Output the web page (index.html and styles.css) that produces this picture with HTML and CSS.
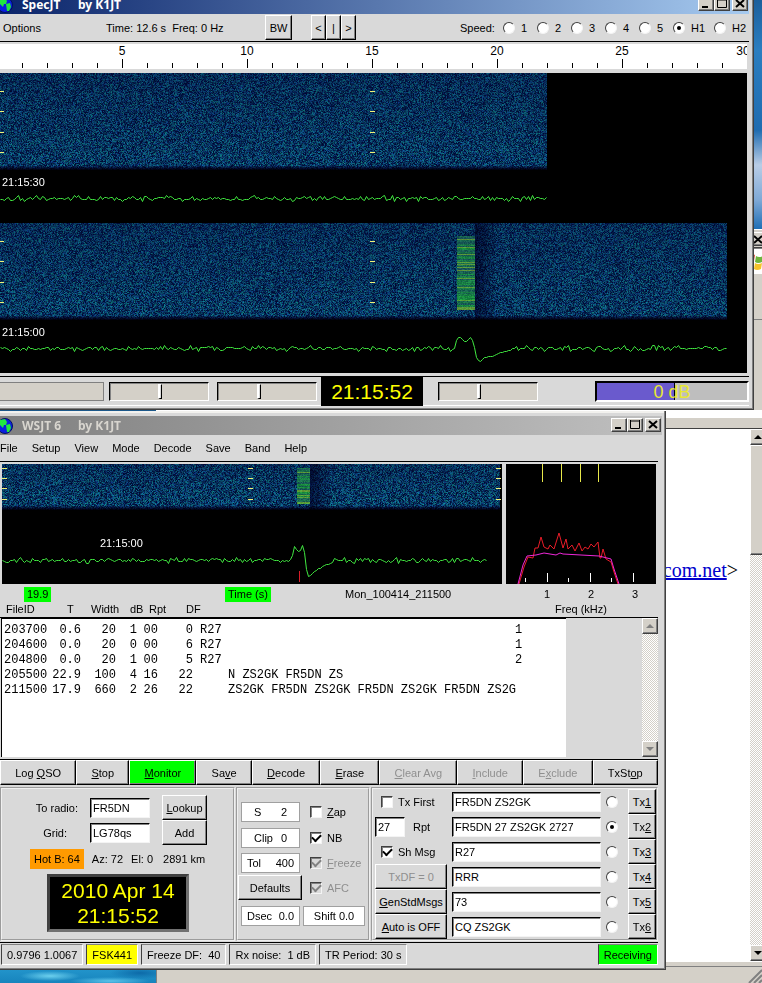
FILE: index.html
```html
<!DOCTYPE html>
<html lang="en">
<head>
    <meta charset="UTF-8">
    <meta name="viewport" content="width=device-width, initial-scale=1.0">
    <title>WSJT 6 by K1JT</title>
    <link rel="stylesheet" href="styles.css">
</head>
<body>
    <div class="desktop">

        <!-- Mail window at the back -->
        <div class="window mail">
            <div class="mail-title"><button class="win-btn" aria-label="Close"><svg width="10" height="9"><path d="M1 1l8 7M9 1l-8 7" stroke="#000" stroke-width="2"/></svg></button></div>
            <div class="mail-brand">
                <svg width="20" height="20" viewBox="0 0 20 20"><path d="M3 3q3-2 6 0l-1 6q-3-2-6 0z" fill="#d9573a"/><path d="M10 4q3 2 7 0l-1 6q-4 2-7 0z" fill="#6fb53c"/><path d="M2 10q3-2 6 0l-1 6q-3-2-6 0z" fill="#3b78cf"/><path d="M9 11q3 2 7 0l-1 6q-4 2-7 0z" fill="#f5c32c"/></svg>
            </div>
            <div class="mail-tools"></div>
            <div class="mail-fields"></div>
            <div class="mail-body">
                <div class="mail-text"><a href="#">com.net</a>&gt;</div>
                <div class="scrollbar">
                    <button class="scroll-btn" aria-label="Scroll up"><svg width="8" height="4"><path d="M4 0l4 4H0z"/></svg></button>
                    <div class="scroll-thumb"></div>
                    <button class="scroll-btn last" aria-label="Scroll down"><svg width="8" height="4"><path d="M0 0h8L4 4z"/></svg></button>
                </div>
            </div>
            <div class="mail-status"><svg width="14" height="14"><path d="M1 14L14 1M6 14l8-8M11 14l3-3" stroke="#808080" stroke-width="2"/></svg></div>
        </div>

        <!-- SpecJT -->
        <div class="window spec">
            <div class="title-bar active">
                <svg class="globe" width="16" height="16" viewBox="0 0 16 16"><circle cx="8" cy="8" r="7.5" fill="#0a1ee0" stroke="#001060"/><path d="M3 2l5-1 2 3-1 3-2 0-1 3-4-4zM9 7l4-1 1 4-2 4-2 0z" fill="#20e840"/></svg>
                <span class="app-name">SpecJT</span><span>by K1JT</span>
                <div class="win-btns">
                    <button class="win-btn" aria-label="Minimize"><svg width="10" height="9"><path d="M1 8h6" stroke="#000" stroke-width="2"/></svg></button>
                    <button class="win-btn" aria-label="Maximize"><svg width="10" height="9"><path d="M.5 0v8.500h9V0M0 1h10" fill="none" stroke="#000"/></svg></button>
                    <button class="win-btn close" aria-label="Close"><svg width="10" height="9"><path d="M1 1l8 7M9 1l-8 7" stroke="#000" stroke-width="2"/></svg></button>
                </div>
            </div>
            <div class="spec-menu">
                <span class="spec-options">Options</span>
                <span class="spec-time">Time: 12.6 s&nbsp; Freq: 0 Hz</span>
                <button class="tk-btn bw">BW</button>
                <div class="nudge">
                    <button class="tk-btn">&lt;</button><button class="tk-btn">|</button><button class="tk-btn">&gt;</button>
                </div>
                <div class="speed">
                    <span>Speed:</span>
                    <label><input type="radio" name="speed">1</label>
                    <label><input type="radio" name="speed">2</label>
                    <label><input type="radio" name="speed">3</label>
                    <label><input type="radio" name="speed">4</label>
                    <label><input type="radio" name="speed">5</label>
                    <label class="wide"><input type="radio" name="speed" checked>H1</label>
                    <label class="wide"><input type="radio" name="speed">H2</label>
                </div>
            </div>
            <svg class="ruler">
                <defs>
                    <pattern id="minor" x="-3" y="0" width="25" height="25" patternUnits="userSpaceOnUse"><rect y="19" width="1" height="5"/></pattern>
                    <pattern id="major" x="-3" y="0" width="125" height="25" patternUnits="userSpaceOnUse"><rect y="15" width="1" height="9"/></pattern>
                </defs>
                <rect width="100%" height="25" fill="url(#minor)"/>
                <rect width="100%" height="25" fill="url(#major)"/>
                <g text-anchor="middle">
                    <text x="122" y="11">5</text>
                    <text x="247" y="11">10</text>
                    <text x="372" y="11">15</text>
                    <text x="497" y="11">20</text>
                    <text x="622" y="11">25</text>
                    <text x="743" y="11">30</text>
                </g>
            </svg>
            <div class="plot spec-plot">
                <canvas id="spec-canvas"></canvas>
                <span class="stamp first">21:15:30</span>
                <span class="stamp second">21:15:00</span>
            </div>
            <div class="spec-status">
                <div class="status-bar"></div>
                <input type="range" class="scale" aria-label="Brightness" value="51">
                <input type="range" class="scale" aria-label="Contrast" value="42">
                <div class="clock">21:15:52</div>
                <input type="range" class="scale gain" aria-label="Gain" value="40">
                <div class="level"><div class="level-fill" style="width: 52%"></div><span>0 dB</span></div>
            </div>
        </div>

        <!-- WSJT main window -->
        <div class="window wsjt">
            <div class="title-bar">
                <svg class="globe" width="16" height="16" viewBox="0 0 16 16"><circle cx="8" cy="8" r="7.5" fill="#0a1ee0" stroke="#001060"/><path d="M3 2l5-1 2 3-1 3-2 0-1 3-4-4zM9 7l4-1 1 4-2 4-2 0z" fill="#20e840"/></svg>
                <span class="app-name">WSJT 6</span><span>by K1JT</span>
                <div class="win-btns">
                    <button class="win-btn" aria-label="Minimize"><svg width="10" height="9"><path d="M1 8h6" stroke="#000" stroke-width="2"/></svg></button>
                    <button class="win-btn" aria-label="Maximize"><svg width="10" height="9"><path d="M.5 0v8.500h9V0M0 1h10" fill="none" stroke="#000"/></svg></button>
                    <button class="win-btn close" aria-label="Close"><svg width="10" height="9"><path d="M1 1l8 7M9 1l-8 7" stroke="#000" stroke-width="2"/></svg></button>
                </div>
            </div>
            <div class="content">
                <nav class="menu">
                    <span>File</span><span>Setup</span><span>View</span><span>Mode</span><span>Decode</span><span>Save</span><span>Band</span><span>Help</span>
                </nav>
                <div class="graphs">
                    <div class="graph-main">
                        <div class="plot main-plot">
                            <canvas id="main-canvas"></canvas>
                            <span class="stamp main">21:15:00</span>
                        </div>
                        <div class="under">
                            <span class="green">19.9</span><span class="green">Time (s)</span><span>Mon_100414_211500</span>
                        </div>
                        <div class="columns">
                            <span>FileID</span><span>T</span><span>Width</span><span>dB</span><span>Rpt</span><span>DF</span>
                        </div>
                    </div>
                    <div class="graph-freq">
                        <svg class="freq-plot" viewBox="0 0 150 120" fill="none">
                            <path d="M36.500 0v18M55.500 0v18M74.500 0v18M92.500 0v18" stroke="#e8e84a"/>
                            <path d="M41.500 109v9M84.500 109v9M127.500 109v9M19.500 114v4M62.500 114v4M105.500 114v4" stroke="#fff"/>
                            <polyline stroke="#e81c28" points="13,120 18,103 22,93 27,94 29,84 32,84 35,73 38,83 42,85 44,81 48,85 53,69 57,84 60,75 62,85 66,81 69,87 73,79 76,87 79,83 82,85 85,80 88,83 92,78 94,94 95,94 97,85 100,95 105,98 108,108 112,120"/>
                            <polyline stroke="#f028d8" points="12,120 17,101 21,92 30,91 38,89 50,91 54,89 57,90 75,91 93,92 105,95 108,105 113,120"/>
                        </svg>
                        <div class="khz"><span>1</span><span>2</span><span>3</span></div>
                        <div class="freq-label">Freq (kHz)</div>
                    </div>
                </div>

                <div class="decodes">
                    <div class="decode-text">
                        <table>
                            <colgroup><col class="c-id"><col class="c-t"><col class="c-w"><col class="c-db"><col class="c-rpt"><col class="c-df"><col class="c-short"><col class="c-msg"><col></colgroup>
                            <tr><td>203700</td><td>0.6</td><td>20</td><td>1</td><td>00</td><td>0</td><td>R27</td><td></td><td>1</td></tr>
                            <tr><td>204600</td><td>0.0</td><td>20</td><td>0</td><td>00</td><td>6</td><td>R27</td><td></td><td>1</td></tr>
                            <tr><td>204800</td><td>0.0</td><td>20</td><td>1</td><td>00</td><td>5</td><td>R27</td><td></td><td>2</td></tr>
                            <tr><td>205500</td><td>22.9</td><td>100</td><td>4</td><td>16</td><td>22</td><td></td><td>N ZS2GK FR5DN ZS</td><td></td></tr>
                            <tr><td>211500</td><td>17.9</td><td>660</td><td>2</td><td>26</td><td>22</td><td></td><td>ZS2GK FR5DN ZS2GK FR5DN ZS2GK FR5DN ZS2G</td><td></td></tr>
                        </table>
                    </div>
                    <div class="scrollbar">
                        <button class="scroll-btn" aria-label="Scroll up" disabled><svg width="8" height="4"><path d="M4 0l4 4H0z"/></svg></button>
                        <button class="scroll-btn last" aria-label="Scroll down" disabled><svg width="8" height="4"><path d="M0 0h8L4 4z"/></svg></button>
                    </div>
                </div>

                <div class="actions">
                    <button class="tk-btn">Log <u>Q</u>SO</button>
                    <button class="tk-btn"><u>S</u>top</button>
                    <button class="tk-btn on"><u>M</u>onitor</button>
                    <button class="tk-btn">Sa<u>v</u>e</button>
                    <button class="tk-btn"><u>D</u>ecode</button>
                    <button class="tk-btn"><u>E</u>rase</button>
                    <button class="tk-btn" disabled><u>C</u>lear Avg</button>
                    <button class="tk-btn" disabled><u>I</u>nclude</button>
                    <button class="tk-btn" disabled>E<u>x</u>clude</button>
                    <button class="tk-btn">TxSt<u>o</u>p</button>
                </div>

                <div class="panels">
                    <div class="panel station">
                        <div class="station-form">
                            <label for="to-radio">To radio:</label>
                            <input type="text" id="to-radio" value="FR5DN">
                            <button class="tk-btn"><u>L</u>ookup</button>
                            <label for="grid">Grid:</label>
                            <input type="text" id="grid" value="LG78qs">
                            <button class="tk-btn">Add</button>
                        </div>
                        <div class="bearing">
                            <span class="hot">Hot B: 64</span><span>Az: 72</span><span>El: 0</span><span>2891 km</span>
                        </div>
                        <div class="clock date">2010 Apr 14<br>21:15:52</div>
                    </div>

                    <div class="panel params">
                        <div class="value"><span>S</span><span>2</span></div>
                        <label><input type="checkbox"><span><u>Z</u>ap</span></label>
                        <div class="value"><span>Clip</span><span>0</span></div>
                        <label><input type="checkbox" checked><span>NB</span></label>
                        <div class="value"><span>Tol</span><span>400</span></div>
                        <label class="off"><input type="checkbox" checked disabled><span><u>F</u>reeze</span></label>
                        <button class="tk-btn">Defaults</button>
                        <label class="off"><input type="checkbox" checked disabled><span>AFC</span></label>
                        <div class="value"><span>Dsec</span><span>0.0</span></div>
                        <div class="value shift"><span>Shift 0.0</span></div>
                    </div>

                    <div class="panel messages">
                        <label class="check"><input type="checkbox"><span>Tx First</span></label>
                        <input type="text" aria-label="Message 1" value="FR5DN ZS2GK">
                        <input type="radio" name="tx" aria-label="Select Tx1">
                        <button class="tk-btn">Tx<u>1</u></button>

                        <label class="report"><input type="text" value="27"><span>Rpt</span></label>
                        <input type="text" aria-label="Message 2" value="FR5DN 27 ZS2GK 2727">
                        <input type="radio" name="tx" aria-label="Select Tx2" checked>
                        <button class="tk-btn">Tx<u>2</u></button>

                        <label class="check"><input type="checkbox" checked><span>Sh Msg</span></label>
                        <input type="text" aria-label="Message 3" value="R27">
                        <input type="radio" name="tx" aria-label="Select Tx3">
                        <button class="tk-btn">Tx<u>3</u></button>

                        <button class="tk-btn" disabled>TxDF = 0</button>
                        <input type="text" aria-label="Message 4" value="RRR">
                        <input type="radio" name="tx" aria-label="Select Tx4">
                        <button class="tk-btn">Tx<u>4</u></button>

                        <button class="tk-btn"><u>G</u>enStdMsgs</button>
                        <input type="text" aria-label="Message 5" value="73">
                        <input type="radio" name="tx" aria-label="Select Tx5">
                        <button class="tk-btn">Tx<u>5</u></button>

                        <button class="tk-btn"><u>A</u>uto is OFF</button>
                        <input type="text" aria-label="Message 6" value="CQ ZS2GK">
                        <input type="radio" name="tx" aria-label="Select Tx6">
                        <button class="tk-btn">Tx<u>6</u></button>
                    </div>
                </div>

                <div class="status">
                    <span>0.9796 1.0067</span>
                    <span class="mode">FSK441</span>
                    <span>Freeze DF:&nbsp; 40</span>
                    <span>Rx noise:&nbsp; 1 dB</span>
                    <span>TR Period: 30 s</span>
                    <span class="receiving">Receiving</span>
                </div>
            </div>
        </div>
    </div>

    <script src="plots.js"></script>
</body>
</html>
```
FILE: styles.css
```css
* {
    box-sizing: border-box;
}

body {
    margin: 0;
    font-family: 'Liberation Sans', Arial, sans-serif;
    font-size: 11px;
    line-height: 14px;
    color: #000;
}

button, input {
    font: inherit;
    color: inherit;
    margin: 0;
    padding: 0;
    border-radius: 0;
}

.desktop {
    position: relative;
    min-height: 100vh;
    overflow: hidden;
    background:
        radial-gradient(ellipse 30px 5px at 50px 976px, #6cd0ee, transparent),
        radial-gradient(ellipse 40px 4px at 110px 981px, #5cc4ea, transparent),
        radial-gradient(ellipse 30px 6px at 140px 973px, #0d6aa8, transparent),
        linear-gradient(#1c5f9c 0, #2b7ec0 50px, #1f6cb0 130px, #b9cde6 165px, #7fa9d6 200px, #1c6db4 230px, #1b5687 420px, #2a9fd4 960px, #1784bd 100%);
}

/* Window frames */
.window {
    position: absolute;
    display: flex;
    flex-direction: column;
    background: #d9d9d9;
    border: solid #404040;
    border-width: 0 1px 1px 0;
    box-shadow: inset -1px -1px #808080, inset 0 2px #f2f1ee;
}

.title-bar {
    display: flex;
    align-items: center;
    height: 19px;
    padding-right: 1px;
    background: linear-gradient(90deg, #808080, #c0c0c0);
    color: #d8d5cf;
    font-family: 'Noto Sans', sans-serif;
    font-size: 12px;
    font-weight: bold;
}

.title-bar.active {
    background: linear-gradient(90deg, #0a246a, #a6caf0);
    color: #fff;
}

.globe {
    flex: none;
    margin: 0 9px 0 -3px;
}

.app-name {
    width: 56px;
}

.win-btns {
    display: flex;
    margin: 0 0 2px auto;
}

.win-btn, .scroll-btn {
    display: flex;
    align-items: center;
    justify-content: center;
    width: 16px;
    height: 14px;
    background: #d4d0c8;
    border: 1px solid;
    border-color: #fff #404040 #404040 #fff;
    box-shadow: inset -1px -1px #808080;
}

.win-btn.close {
    margin-left: 2px;
}

/* Tk widgets */
.tk-btn {
    background: #d9d9d9;
    border: 1px solid;
    border-color: #fff #000 #000 #fff;
    box-shadow: inset -1px -1px #828282;
    white-space: nowrap;
}

.tk-btn:disabled, .off {
    color: #8f8f8f;
}

input[type="text"] {
    min-width: 0;
    height: 20px;
    padding: 0 2px;
    background: #fff;
    border: 1px solid;
    border-color: #000 #f4f4f4 #f4f4f4 #000;
    box-shadow: inset 1px 1px #828282;
}

input[type="radio"], input[type="checkbox"] {
    appearance: none;
    display: grid;
    place-items: center;
    flex: none;
    width: 12px;
    height: 12px;
    background: #fff;
    border: 1px solid;
    border-color: #404040 #f4f4f4 #f4f4f4 #404040;
}

input[type="checkbox"] {
    box-shadow: inset 1px 1px #828282;
}

input[type="radio"] {
    border-radius: 50%;
}

input[type="radio"]:checked::before {
    content: "";
    width: 4px;
    height: 4px;
    border-radius: 50%;
    background: #000;
}

input[type="checkbox"]:checked::before {
    content: "";
    width: 7px;
    height: 4px;
    margin-bottom: 2px;
    border: solid #000;
    border-width: 0 0 2px 2px;
    transform: rotate(-45deg);
}

input[type="checkbox"]:disabled {
    background: #d9d9d9;
}

input[type="checkbox"]:disabled::before {
    border-color: #828282;
}

.clock {
    background: #000;
    color: #ff0;
    font-size: 21px;
    line-height: 25px;
    text-align: center;
}

.plot {
    position: relative;
    background: #000;
}

.plot canvas {
    display: block;
    width: 100%;
    height: 100%;
}

.stamp {
    position: absolute;
    left: 2px;
    color: #fff;
}

.stamp.first { top: 102px; }
.stamp.second { top: 252px; }
.stamp.main { left: 98px; top: 72px; }

.scrollbar {
    display: flex;
    flex-direction: column;
    flex: none;
    width: 16px;
    background: repeating-conic-gradient(#fff 0 25%, #d4d0c8 0 50%) 0 0 / 2px 2px;
}

.scroll-btn {
    height: 16px;
    flex: none;
}

.scroll-btn:disabled {
    fill: #808080;
}

.scroll-btn.last {
    margin-top: auto;
}

.scroll-thumb {
    height: 110px;
    background: #d4d0c8;
    border: 1px solid;
    border-color: #fff #404040 #404040 #fff;
    box-shadow: inset -1px -1px #808080;
}

/* Mail window */
.mail {
    top: 229px;
    left: 156px;
    right: -4px;
    bottom: 0;
    background: #d4d0c8;
    border: 0;
    box-shadow: inset 1px 1px #fff;
}

.mail-title {
    display: flex;
    justify-content: flex-end;
    height: 19px;
    padding-top: 3px;
    border-bottom: 1px solid #404040;
}

.mail-brand {
    display: flex;
    justify-content: flex-end;
    height: 26px;
    padding: 3px 0;
    background: #fff;
    border-top: 1px solid #808080;
}

.mail-tools {
    height: 46px;
    border-bottom: 1px solid #808080;
}

.mail-fields {
    height: 109px;
    margin-left: 1px;
    border-bottom: 1px solid #404040;
    background: linear-gradient(#d4d0c8 90px, #fff 90px, #fff 98px, #d4d0c8 98px);
}

.mail-body {
    display: flex;
    flex: 1;
    background: #fff;
}

.mail-text {
    flex: 1;
    padding: 129px 12px 0 0;
    font-family: 'Liberation Serif', 'Times New Roman', serif;
    font-size: 20px;
    line-height: 24px;
    text-align: right;
}

.mail-text a {
    color: #00c;
}

.mail-status {
    display: flex;
    justify-content: flex-end;
    align-items: flex-end;
    height: 22px;
    padding-right: 4px;
    border-top: 1px solid #fff;
    box-shadow: inset 0 4px #d4d0c8, inset 1px 5px #808080;
}

/* SpecJT */
.spec {
    top: -9px;
    left: 0;
    right: 8px;
    padding: 4px 4px 3px 0;
}

.spec-menu {
    display: flex;
    align-items: center;
    height: 28px;
    border-bottom: 1px solid #000;
}

.spec-options {
    width: 103px;
    padding-left: 3px;
}

.spec-time {
    width: 162px;
    padding-left: 3px;
}

.bw {
    width: 27px;
    height: 25px;
}

.nudge {
    display: flex;
    margin-left: 19px;
}

.nudge .tk-btn {
    width: 15px;
    height: 25px;
}

.speed {
    display: flex;
    align-items: center;
    margin-left: auto;
}

.speed span {
    width: 43px;
}

.speed label {
    display: flex;
    align-items: center;
    gap: 6px;
    width: 34px;
}

.speed .wide {
    width: 41px;
}

.speed .wide:last-child {
    width: 35px;
}

.ruler {
    display: block;
    width: calc(100% - 2px);
    height: 25px;
    margin: 2px 0 4px;
    background: #fff;
    font-size: 12px;
}

.spec-plot {
    height: 300px;
    margin-right: 2px;
}

.spec-status {
    display: flex;
    align-items: center;
    height: 30px;
    margin-top: 3px;
    border-top: 1px solid #000;
    box-shadow: inset 0 -1px #fff;
}

.status-bar {
    width: 104px;
    height: 19px;
    margin-right: 5px;
    background: #d4d0c8;
    border: 1px solid #808080;
    border-left: 0;
}

.scale {
    appearance: none;
    width: 100px;
    height: 19px;
    margin-right: 8px;
    background: #d4d0c8;
    border: 1px solid;
    border-color: #000 #fff #fff #000;
    box-shadow: inset 1px 1px #828282;
}

.scale::-webkit-slider-thumb {
    appearance: none;
    width: 4px;
    height: 15px;
    background: #d9d9d9;
    border: solid;
    border-width: 1px 1px 1px 2px;
    border-color: #fff #000 #000 #fff;
}

.spec-status .clock {
    width: 102px;
    height: 29px;
    margin-left: -4px;
    line-height: 29px;
}

.scale.gain {
    margin: 0 57px 0 15px;
}

.level {
    position: relative;
    flex: 1;
    height: 21px;
    background: #bebebe;
    border: 2px solid;
    border-color: #000 #fff #fff #000;
    color: #e8e832;
    font-size: 18px;
    line-height: 18px;
    text-align: center;
}

.level-fill {
    height: 100%;
    background: #6a5acd;
    border-right: 1px solid #000;
}

.level span {
    position: absolute;
    inset: 0;
}

/* WSJT */
.wsjt {
    top: 411px;
    left: 0;
    right: 96px;
    padding: 5px 3px 4px 0;
}

.content {
    padding-right: 4px;
}

.menu {
    display: flex;
    align-items: center;
    gap: 14px;
    height: 27px;
    border-bottom: 1px solid #000;
}

.graphs {
    display: flex;
    gap: 4px;
    padding: 2px 2px 0;
}

.graph-main {
    flex: 1;
}

.graph-freq {
    width: 150px;
}

.main-plot {
    height: 120px;
}

.freq-plot {
    display: block;
    width: 100%;
    height: 120px;
    background: #000;
}

.under {
    display: grid;
    grid-template-columns: 201px 120px 1fr;
    height: 18px;
    padding: 3px 0 0 22px;
}

.under span {
    justify-self: start;
}

.green {
    padding: 0 3px;
    background: #0f0;
}

.columns {
    display: grid;
    grid-template-columns: 61px 24px 39px 19px 37px 1fr;
    padding-left: 4px;
}

.khz {
    display: grid;
    grid-template-columns: repeat(3, 44px);
    height: 18px;
    padding: 3px 0 0 19px;
    text-align: center;
}

.freq-label {
    text-align: center;
}

.decodes {
    display: flex;
    height: 142px;
    margin-top: 1px;
    border-top: 1px solid #000;
}

.decode-text {
    flex: 1;
    margin: 0 76px 2px 1px;
    padding: 4px 0 0 2px;
    background: #fff;
    border: solid #000;
    border-width: 1px 0 0 1px;
    font-family: 'Liberation Mono', 'Courier New', monospace;
    font-size: 12px;
    line-height: 15px;
}

.decodes .scrollbar {
    margin-bottom: 2px;
}

.decode-text table {
    width: 100%;
    table-layout: fixed;
    border-collapse: collapse;
}

.decode-text td {
    height: 15px;
    padding: 0;
    white-space: nowrap;
}

.decode-text td:nth-child(2), .decode-text td:nth-child(3),
.decode-text td:nth-child(4), .decode-text td:nth-child(5),
.decode-text td:nth-child(6) {
    text-align: right;
}

.c-id { width: 43px; }
.c-t { width: 34px; }
.c-w { width: 35px; }
.c-db { width: 21px; }
.c-rpt { width: 21px; }
.c-df { width: 35px; }
.c-short { width: 35px; }
.c-msg { width: 287px; }

.decode-text td:nth-child(7) {
    padding-left: 7px;
}

.actions {
    display: flex;
    border-top: 1px solid #000;
}

.actions .tk-btn {
    flex: 1 1 auto;
    height: 25px;
}

.actions .on {
    background: #0f0;
}

.panels {
    display: flex;
    gap: 1px;
    margin-top: 2px;
}

.panel {
    border: 2px groove #f0f0f0;
    height: 154px;
}

.station {
    flex: 1;
}

.station-form {
    display: grid;
    grid-template-columns: 76px 60px 45px;
    grid-auto-rows: 25px;
    align-items: center;
    column-gap: 12px;
    padding-top: 6px;
}

.station-form label {
    text-align: right;
}

.station-form label[for="grid"] {
    padding-right: 11px;
}

.station-form .tk-btn {
    height: 25px;
}

.bearing {
    display: flex;
    align-items: center;
    gap: 8px;
    margin: 4px 0 5px 28px;
}

.bearing span:last-child {
    margin-left: 2px;
}

.hot {
    padding: 3px 4px;
    background: #ff9a00;
}

.clock.date {
    width: 142px;
    margin-left: 45px;
    padding: 1px 0;
    border: 3px solid;
    border-color: #404040 #707070 #707070 #404040;
}

.params {
    display: grid;
    grid-template-columns: 64px 62px;
    grid-template-rows: 26px 25px 25px 25px 31px;
    align-items: center;
    column-gap: 1px;
    width: 134px;
    padding-top: 10px;
}

.value {
    display: flex;
    justify-content: space-between;
    height: 20px;
    margin: 0 2px 0 3px;
    padding: 2px 5px;
    background: #fff;
    border: 1px solid #a0a0a0;
}

.value:first-child, .value:nth-child(3) {
    padding: 2px 12px;
}

.value.shift {
    justify-content: center;
    margin: 0;
    padding: 2px 0;
}

.params .tk-btn {
    height: 25px;
}

.params label {
    display: flex;
    align-items: center;
    gap: 5px;
    padding-left: 7px;
}

.messages {
    display: grid;
    grid-template-columns: 72px 149px 17px 28px;
    grid-auto-rows: 25px;
    column-gap: 5px;
    align-items: center;
    width: 287px;
    padding-left: 2px;
}

.messages .tk-btn {
    height: 25px;
}

.messages .check {
    display: flex;
    align-items: center;
    gap: 5px;
    padding-left: 6px;
}

.messages .report {
    display: flex;
    align-items: center;
    gap: 8px;
}

.report input {
    width: 30px;
}

.status {
    display: flex;
    gap: 3px;
    margin-top: 1px;
    padding: 1px 0 0 1px;
    border-top: 1px solid #000;
}

.status span {
    height: 21px;
    padding: 3px 5px;
    border: 1px solid;
    border-color: #828282 #fff #fff #404040;
    white-space: nowrap;
}

.status .mode {
    background: #ff0;
}

.status .receiving {
    margin-left: auto;
    background: #0f0;
}
```
FILE: plots.js
```js
// Small seeded generator so the noise is the same on each load
let seed = 6441;
function rand() {
    seed |= 0;
    seed = seed + 0x6D2B79F5 | 0;
    let t = Math.imul(seed ^ seed >>> 15, 1 | seed);
    t = t + Math.imul(t ^ t >>> 7, 61 | t) ^ t;
    return ((t ^ t >>> 14) >>> 0) / 4294967296;
}

function setup(id) {
    const canvas = document.getElementById(id);
    canvas.width = canvas.clientWidth;
    canvas.height = canvas.clientHeight;
    return canvas.getContext('2d');
}

// Waterfall strip with an optional meteor burst
function drawWaterfall(ctx, top, width, height, bright, burst) {
    const img = ctx.createImageData(width, height);
    for (let y = 0; y < height; y++) {
        const lineLevel = rand();
        const edge = Math.min(1, (height - y) / 5);
        const tilt = 0.8 + 0.3 * y / height;
        for (let x = 0; x < width; x++) {
            const v = rand() * tilt * bright * edge;
            let r = 14 * v;
            let g = 6 + 125 * v * (0.45 + 0.55 * rand());
            let b = 50 * edge + 105 * v * (0.6 + 0.4 * rand());
            if (burst) {
                if (x >= burst.from && x < burst.to && y > burst.top && y < burst.bottom) {
                    const s = 0.45 + 0.55 * lineLevel;
                    r = lineLevel > 0.85 ? 90 : 15 + 20 * v;
                    g = 135 * s + 45 * v;
                    b = 80 - 35 * lineLevel + 20 * v;
                } else if (x >= burst.to && x < burst.to + 20) {
                    const fade = 0.3 + 0.6 * (x - burst.to) / 20;
                    r *= fade;
                    g *= fade;
                    b *= 0.4 + 0.6 * fade;
                }
            }
            const i = (y * width + x) * 4;
            img.data[i] = r;
            img.data[i + 1] = g * edge;
            img.data[i + 2] = b;
            img.data[i + 3] = 255;
        }
    }
    ctx.putImageData(img, 0, top);
}

function drawMarks(ctx, xs, ys) {
    ctx.fillStyle = '#f0f078';
    xs.forEach(x => ys.forEach(y => ctx.fillRect(x, y, 5, 1)));
}

// Green signal level line; shape holds [x, offset] points of the burst
function drawTrace(ctx, base, width, shape) {
    ctx.strokeStyle = '#40e840';
    ctx.lineWidth = 1;
    ctx.beginPath();
    for (let x = 0; x < width; x += 2) {
        let y = base + (rand() + rand() + rand() - 1.5) * 2.6;
        for (let i = 0; shape && i < shape.length - 1; i++) {
            const [x0, y0] = shape[i];
            const [x1, y1] = shape[i + 1];
            if (x >= x0 && x < x1) {
                y = base + y0 + (y1 - y0) * (x - x0) / (x1 - x0) + rand() - 0.5;
            }
        }
        ctx.lineTo(x + 0.5, Math.round(y) + 0.5);
    }
    ctx.stroke();
}

const spec = setup('spec-canvas');
drawWaterfall(spec, 0, 547, 97, 1);
drawMarks(spec, [-1, 370], [18, 38, 59, 79]);
drawTrace(spec, 125, 548);
drawWaterfall(spec, 150, 727, 97, 1, { from: 457, to: 475, top: 12, bottom: 87 });
drawMarks(spec, [-1, 370], [168, 188, 209, 229]);
drawTrace(spec, 275, 728, [[454, 0], [457, -11], [460, -11], [465, -6], [470, -11], [473, -6], [476, 9], [479, 14], [483, 10], [490, 8], [500, 4], [512, 1]]);

const main = setup('main-canvas');
drawWaterfall(main, 0, 498, 46, 1.1, { from: 295, to: 308, top: 3, bottom: 40 });
drawMarks(main, [0, 246, 494], [4, 14, 24, 35]);
drawTrace(main, 96, 486, [[289, 0], [292, -14], [297, -8], [300, -15], [302, -8], [305, 17], [311, 12], [320, 6], [332, 1]]);
main.fillStyle = '#d81c28';
main.fillRect(297, 107, 1, 11);
```
